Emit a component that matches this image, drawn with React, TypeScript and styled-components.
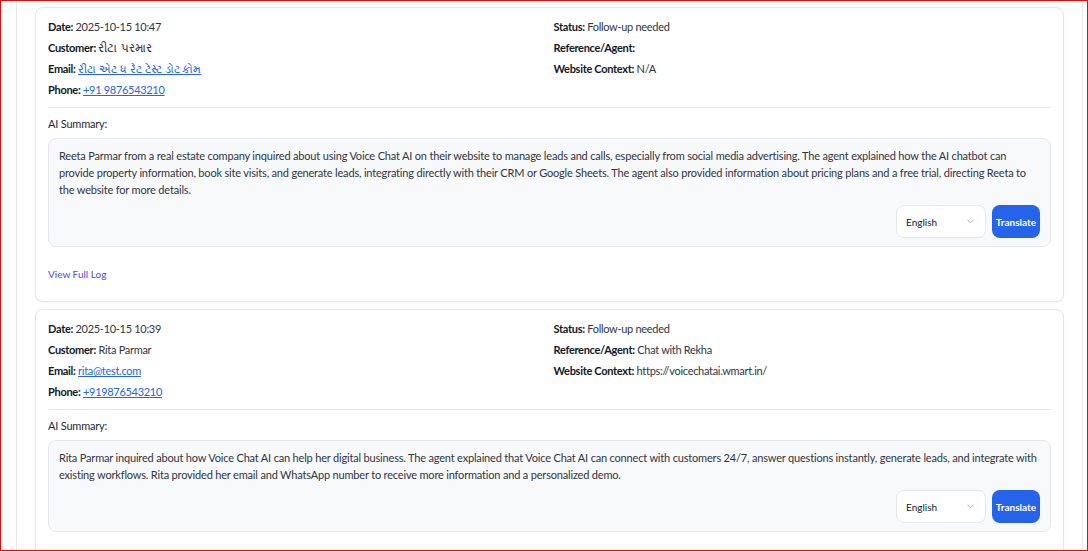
import React from "react";
import styled, { createGlobalStyle } from "styled-components";
import { ChevronDown } from "lucide-react";

const Global = createGlobalStyle`
  html, body { margin: 0; padding: 0; background: #fff; }
  * { box-sizing: border-box; }
  body { font-family: Lato, "Noto Sans", "Liberation Sans", Arial, sans-serif; }
`;

const Frame = styled.div`
  width: 1088px;
  height: 551px;
  border: 1px solid #ff0000;
  padding: 0 4px 0 15px;
  overflow: hidden;
  background: #fff;
`;

const Panel = styled.div`
  height: 100%;
  border-left: 1px solid #e5e7eb;
  border-right: 1px solid #e5e7eb;
  padding: 6px 18px 0 18px;
  display: flex;
  flex-direction: column;
  gap: 7px;
`;

const Card = styled.div`
  border: 1px solid #e2e6ee;
  border-radius: 8px;
  background: #fff;
  padding: 11px 12px 12px;
  box-shadow: 0 1px 2px rgba(15, 23, 42, 0.05);
  flex-shrink: 0;
`;

const InfoGrid = styled.div`
  display: grid;
  grid-template-columns: 1fr 1fr;
  column-gap: 8px;
`;

const InfoCol = styled.div`
  display: flex;
  flex-direction: column;
  gap: 5px;
`;

const Row = styled.div`
  font-size: 11px;
  line-height: 16px;
  letter-spacing: -0.3px;
  color: #2f3542;
  white-space: nowrap;
`;

const Label = styled.span`
  font-weight: 700;
  color: #111827;
`;

const Link = styled.a`
  color: #2563eb;
  text-decoration: underline;
`;

const Gu = styled.span<{ $size: number }>`
  font-size: ${(p) => p.$size}px;
  letter-spacing: 0;
`;

const Divider = styled.hr`
  border: none;
  border-top: 1px solid #e5e7eb;
  margin: 9px 0 8px;
`;

const SummaryLabel = styled.div`
  font-size: 11px;
  line-height: 16px;
  letter-spacing: -0.2px;
  color: #1f2937;
  margin-bottom: 6px;
`;

const SummaryBox = styled.div`
  border: 1px solid #e5e7eb;
  border-radius: 8px;
  background: #f8f9fb;
  padding: 8px 10px 8px;
`;

const SummaryText = styled.p`
  margin: 0;
  font-size: 11px;
  line-height: 17px;
  letter-spacing: -0.18px;
  color: #2f3542;
`;

const Controls = styled.div`
  display: flex;
  justify-content: flex-end;
  gap: 6px;
  margin-top: 7px;
`;

const SelectWrap = styled.div`
  position: relative;
  width: 90px;
  height: 33px;
`;

const Select = styled.select`
  appearance: none;
  width: 100%;
  height: 100%;
  border: 1px solid #e5e7eb;
  border-radius: 8px;
  background: #fff;
  padding: 0 9px;
  font-family: inherit;
  font-size: 10px;
  color: #111827;
  outline: none;
`;

const Chevron = styled(ChevronDown)`
  position: absolute;
  right: 10px;
  top: 11px;
  width: 11px;
  height: 11px;
  color: #9ca3af;
  pointer-events: none;
`;

const Button = styled.button`
  width: 48px;
  height: 33px;
  border: none;
  border-radius: 8px;
  background: #2563eb;
  color: #fff;
  font-family: inherit;
  font-size: 10px;
  font-weight: 700;
  padding: 0;
`;

const LogLink = styled.a`
  display: inline-block;
  margin-top: 20px;
  margin-bottom: 8px;
  font-size: 10px;
  line-height: 14px;
  font-weight: 400;
  color: #4f46e5;
  text-decoration: none;
`;

type Item = {
  date: string;
  customer: React.ReactNode;
  email: React.ReactNode;
  phone: string;
  status: string;
  agent: string;
  context: string;
  summary: string;
  showLog?: boolean;
};

const items: Item[] = [
  {
    date: "2025-10-15 10:47",
    customer: <Gu $size={12}>રીટા પરમાર</Gu>,
    email: <Gu $size={11.3}>રીટા એટ ધ રેટ ટેસ્ટ ડોટ કોમ</Gu>,
    phone: "+91 9876543210",
    status: "Follow-up needed",
    agent: "",
    context: "N/A",
    summary:
      "Reeta Parmar from a real estate company inquired about using Voice Chat AI on their website to manage leads and calls, especially from social media advertising. The agent explained how the AI chatbot can provide property information, book site visits, and generate leads, integrating directly with their CRM or Google Sheets. The agent also provided information about pricing plans and a free trial, directing Reeta to the website for more details.",
    showLog: true,
  },
  {
    date: "2025-10-15 10:39",
    customer: "Rita Parmar",
    email: "rita@test.com",
    phone: "+919876543210",
    status: "Follow-up needed",
    agent: "Chat with Rekha",
    context: "https://voicechatai.wmart.in/",
    summary:
      "Rita Parmar inquired about how Voice Chat AI can help her digital business. The agent explained that Voice Chat AI can connect with customers 24/7, answer questions instantly, generate leads, and integrate with existing workflows. Rita provided her email and WhatsApp number to receive more information and a personalized demo.",
    showLog: true,
  },
];

function LogCard({ item }: { item: Item }) {
  return (
    <Card>
      <InfoGrid>
        <InfoCol>
          <Row>
            <Label>Date:</Label> {item.date}
          </Row>
          <Row>
            <Label>Customer:</Label> {item.customer}
          </Row>
          <Row>
            <Label>Email:</Label> <Link href="#">{item.email}</Link>
          </Row>
          <Row>
            <Label>Phone:</Label> <Link href="#">{item.phone}</Link>
          </Row>
        </InfoCol>
        <InfoCol>
          <Row>
            <Label>Status:</Label> {item.status}
          </Row>
          <Row>
            <Label>Reference/Agent:</Label> {item.agent}
          </Row>
          <Row>
            <Label>Website Context:</Label> {item.context}
          </Row>
        </InfoCol>
      </InfoGrid>
      <Divider />
      <SummaryLabel>AI Summary:</SummaryLabel>
      <SummaryBox>
        <SummaryText>{item.summary}</SummaryText>
        <Controls>
          <SelectWrap>
            <Select defaultValue="English">
              <option>English</option>
              <option>Hindi</option>
              <option>Gujarati</option>
            </Select>
            <Chevron />
          </SelectWrap>
          <Button>Translate</Button>
        </Controls>
      </SummaryBox>
      {item.showLog && <LogLink href="#">View Full Log</LogLink>}
    </Card>
  );
}

export default function App() {
  return (
    <>
      <Global />
      <Frame>
        <Panel>
          {items.map((it) => (
            <LogCard key={it.date} item={it} />
          ))}
        </Panel>
      </Frame>
    </>
  );
}
